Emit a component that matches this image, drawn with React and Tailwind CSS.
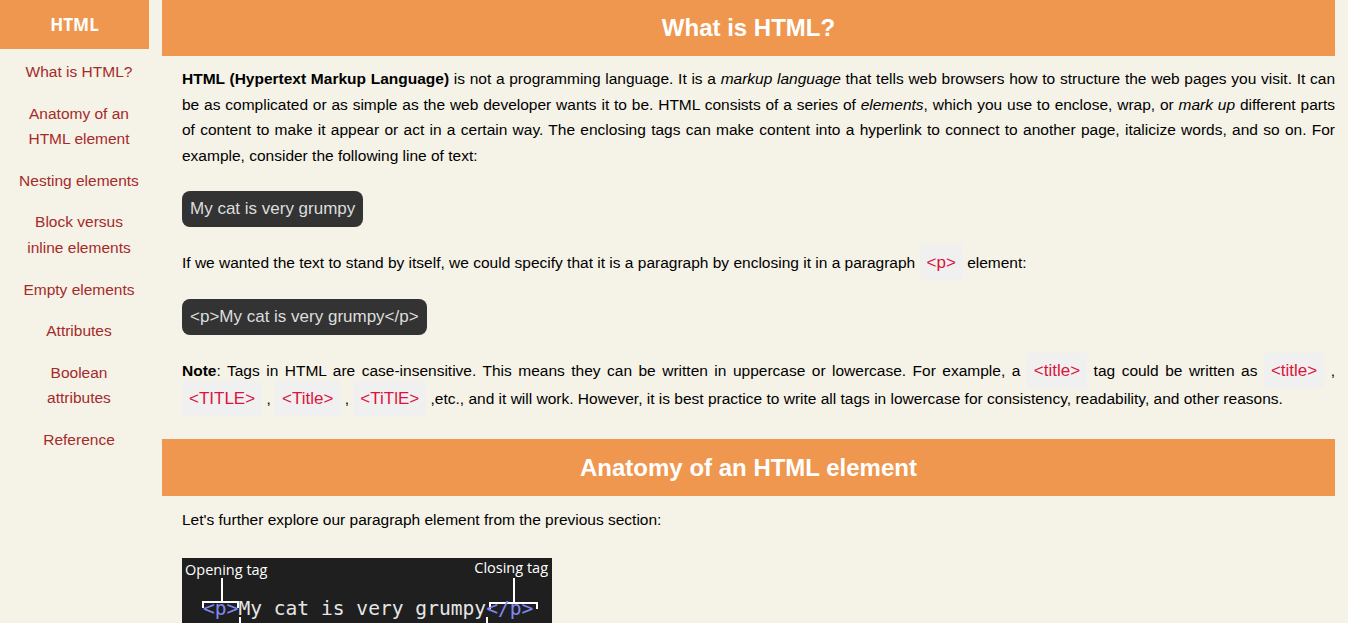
import React from "react";

const Code = ({ children }) => (
  <code className="bg-[#f0f0f0] text-[#dc143c] px-[7px] py-2 text-[17px] font-['Liberation_Sans',Arial,sans-serif]">
    {children}
  </code>
);

const navItems = [
  "What is HTML?",
  "Anatomy of an HTML element",
  "Nesting elements",
  "Block versus inline elements",
  "Empty elements",
  "Attributes",
  "Boolean attributes",
  "Reference",
];

function Diagram() {
  return (
    <div className="mt-[25px] ml-5 w-[370px] h-[130px] bg-[#1f1f1f]">
      <svg width="370" height="130" viewBox="0 0 370 130">
        <text x="3" y="17" fill="#ffffff" fontSize="14.5" fontFamily="'Open Sans', sans-serif">
          Opening tag
        </text>
        <text x="366" y="15" fill="#ffffff" fontSize="14.5" textAnchor="end" fontFamily="'Open Sans', sans-serif">
          Closing tag
        </text>
        <g stroke="#ffffff" strokeWidth="2" fill="none">
          <path d="M40 20 V44 M21 50 V44 H56 V50" />
          <path d="M332 20 V45 M308 51 V45 H355 V51" />
          <path d="M58 59 V130 M305 59 V130" />
        </g>
        <text x="21" y="57" fontSize="19.6" fontFamily="'DejaVu Sans Mono', monospace" fill="#e6e6e6">
          <tspan fill="#7f88f5">&lt;p&gt;</tspan>
          <tspan>My cat is very grumpy</tspan>
          <tspan fill="#7f88f5">&lt;/p&gt;</tspan>
        </text>
      </svg>
    </div>
  );
}

export default function App() {
  return (
    <div className="min-h-screen bg-[#f5f2e7] flex font-['Liberation_Sans',Arial,sans-serif] text-black text-[15.5px] leading-[25.6px]">
      <aside className="w-[158px] shrink-0">
        <div className="w-[149px] h-[49px] bg-[#ef974f] flex items-center justify-center text-white font-bold text-[17px] font-['Open_Sans',sans-serif]">
          HTML
        </div>
        <ul className="px-[18px] mt-[10px] flex flex-col gap-4 text-center text-[#a52a2a]">
          {navItems.map((t) => (
            <li key={t}>{t}</li>
          ))}
        </ul>
      </aside>

      <main className="ml-1 w-[1173px] shrink-0">
        <h2 className="h-[56px] bg-[#ef974f] flex items-center justify-center text-white font-bold text-[24px]">
          What is HTML?
        </h2>
        <p className="mt-[10px] ml-5 text-justify">
          <b>HTML (Hypertext Markup Language)</b> is not a programming language. It is a <i>markup language</i> that
          tells web browsers how to structure the web pages you visit. It can be as complicated or as simple as the web
          developer wants it to be. HTML consists of a series of <i>elements</i>, which you use to enclose, wrap, or{" "}
          <i>mark up</i> different parts of content to make it appear or act in a certain way. The enclosing tags can
          make content into a hyperlink to connect to another page, italicize words, and so on. For example, consider
          the following line of text:
        </p>
        <div className="mt-[23px] ml-5">
          <span className="inline-block bg-[#333333] text-[#dddddd] rounded-lg px-2 py-2 text-[17px] leading-[20px]">
            My cat is very grumpy
          </span>
        </div>
        <p className="mt-[22px] ml-5 leading-[28px]">
          If we wanted the text to stand by itself, we could specify that it is a paragraph by enclosing it in a
          paragraph <Code>&lt;p&gt;</Code> element:
        </p>
        <div className="mt-[22px] ml-5">
          <span className="inline-block bg-[#333333] text-[#dddddd] rounded-lg px-2 py-2 text-[17px] leading-[20px]">
            &lt;p&gt;My cat is very grumpy&lt;/p&gt;
          </span>
        </div>
        <p className="mt-[22px] ml-5 text-justify leading-[28px]">
          <b>Note</b>: Tags in HTML are case-insensitive. This means they can be written in uppercase or lowercase. For
          example, a <Code>&lt;title&gt;</Code> tag could be written as <Code>&lt;title&gt;</Code> ,{" "}
          <Code>&lt;TITLE&gt;</Code> , <Code>&lt;Title&gt;</Code> , <Code>&lt;TiTlE&gt;</Code> ,etc., and it will
          work. However, it is best practice to write all tags in lowercase for consistency, readability, and other
          reasons.
        </p>

        <h2 className="mt-[26px] h-[57px] bg-[#ef974f] flex items-center justify-center text-white font-bold text-[24px]">
          Anatomy of an HTML element
        </h2>
        <p className="mt-[11px] ml-5">Let's further explore our paragraph element from the previous section:</p>
        <Diagram />
      </main>
    </div>
  );
}
